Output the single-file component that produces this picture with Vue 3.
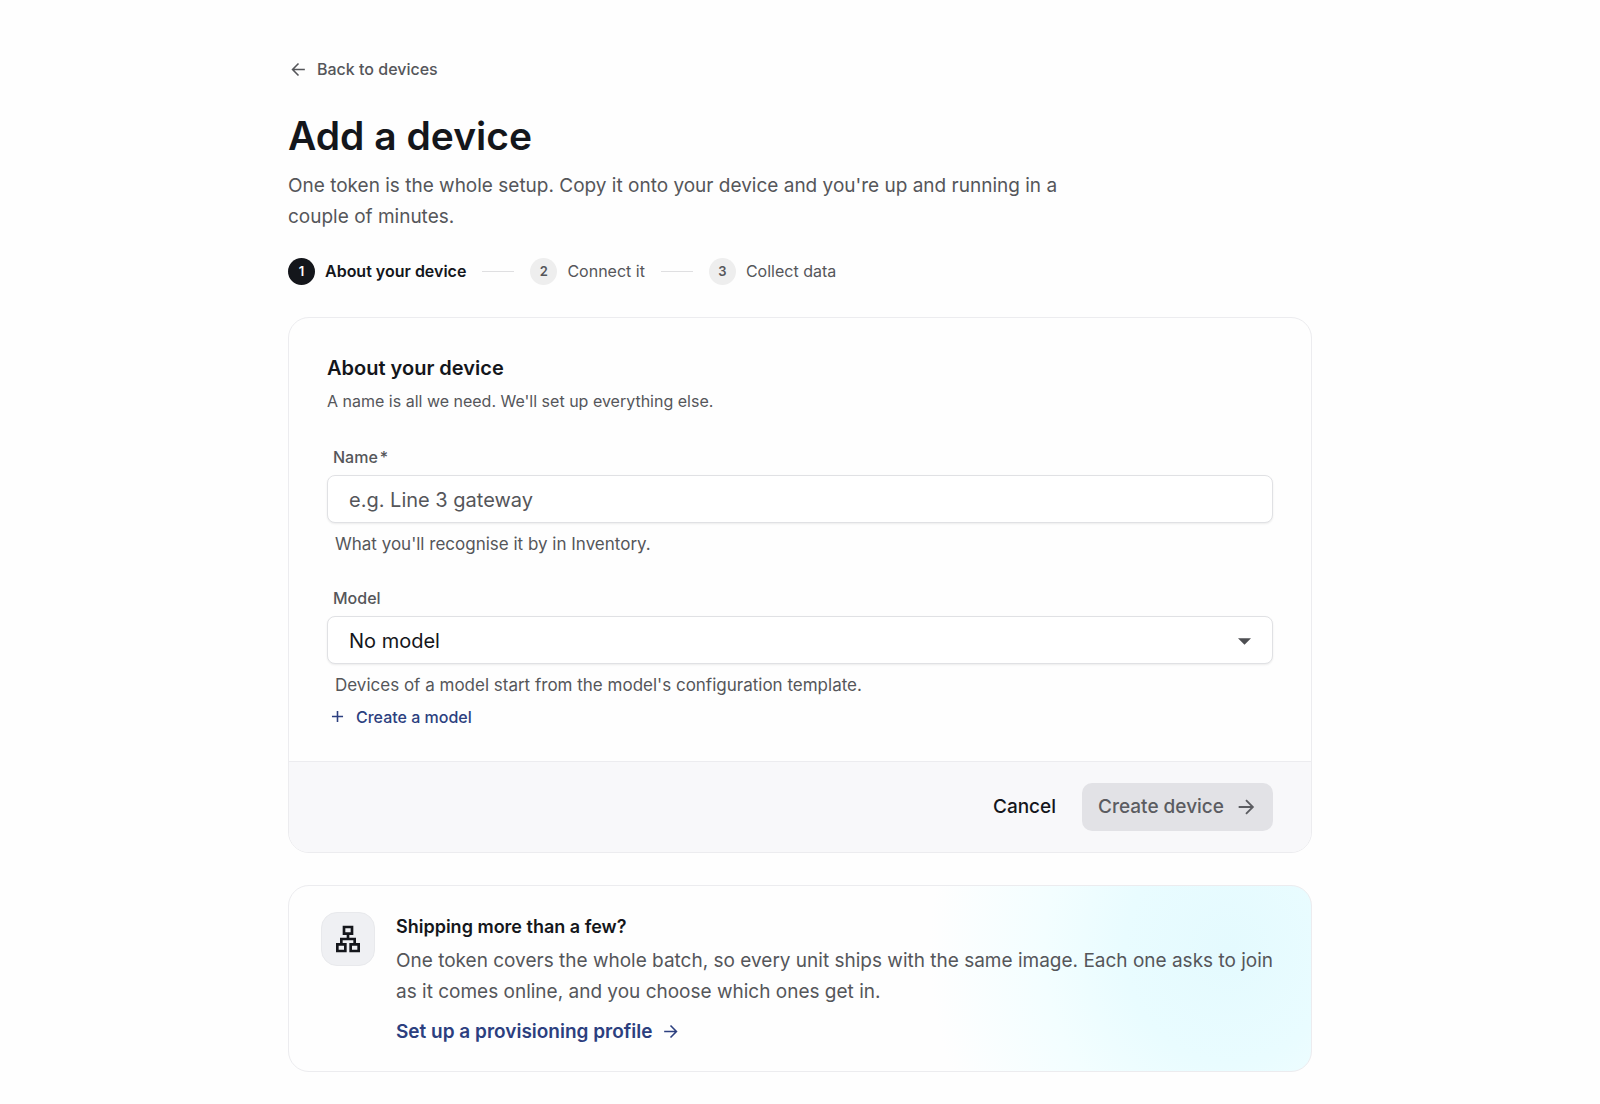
<script setup>
import { ref } from 'vue'

const steps = ['About your device', 'Connect it', 'Collect data']
const current = ref(0)
const name = ref('')
const model = ref('none')
</script>

<template>
  <main class="page">
    <a class="back" href="#devices">
      <svg class="icon" viewBox="0 0 24 24" aria-hidden="true"><path d="M20 12H5M12 4.500 4.500 12l7.500 7.500" /></svg>
      Back to devices
    </a>

    <h1>Add a device</h1>
    <p class="intro">One token is the whole setup. Copy it onto your device and you're up and running in a couple of minutes.</p>

    <ol class="steps">
      <li v-for="(step, i) in steps" :key="step" :class="{ active: i === current }">
        <span class="num">{{ i + 1 }}</span>
        <span>{{ step }}</span>
      </li>
    </ol>

    <form class="card" @submit.prevent>
      <div class="body">
        <h2>About your device</h2>
        <p class="sub">A name is all we need. We'll set up everything else.</p>

        <div class="field">
          <label for="name">Name<span class="star">*</span></label>
          <input id="name" v-model="name" type="text" placeholder="e.g. Line 3 gateway" />
          <p class="hint">What you'll recognise it by in Inventory.</p>
        </div>

        <div class="field">
          <label for="model">Model</label>
          <div class="select">
            <select id="model" v-model="model">
              <option value="none">No model</option>
            </select>
            <svg viewBox="0 0 12 6" aria-hidden="true"><path d="M0 0h12L6 6z" /></svg>
          </div>
          <p class="hint">Devices of a model start from the model's configuration template.</p>
        </div>

        <button class="create-model" type="button">
          <svg class="icon" viewBox="0 0 24 24" aria-hidden="true"><path d="M12 5v14M5 12h14" /></svg>
          Create a model
        </button>
      </div>

      <footer>
        <button class="cancel" type="button">Cancel</button>
        <button class="submit" type="submit" disabled>
          Create device
          <svg class="icon" viewBox="0 0 24 24" aria-hidden="true"><path d="M4 12h15M12 4.500l7.500 7.500-7.500 7.500" /></svg>
        </button>
      </footer>
    </form>

    <section class="card promo">
      <div class="tile">
        <svg viewBox="0 0 24 24" aria-hidden="true">
          <path fill-rule="evenodd" d="M13 22h8v-7h-3v-4h-5V9h3V2H8v7h3v2H6v4H3v7h8v-7H8v-2h8v2h-3v7zM10 7V4h4v3h-4zM9 17v3H5v-3h4zM19 17v3h-4v-3h4z" />
        </svg>
      </div>
      <div class="copy">
        <h3>Shipping more than a few?</h3>
        <p>One token covers the whole batch, so every unit ships with the same image. Each one asks to join as it comes online, and you choose which ones get in.</p>
        <a href="#provisioning">
          Set up a provisioning profile
          <svg class="icon" viewBox="0 0 24 24" aria-hidden="true"><path d="M4 12h15M12 4.500l7.500 7.500-7.500 7.500" /></svg>
        </a>
      </div>
    </section>
  </main>
</template>

<style>
body {
  margin: 0;
  background: #fefefe;
}
</style>

<style scoped>
* {
  box-sizing: border-box;
}

.page {
  max-width: 1024px;
  margin: 0 auto;
  padding: 56px 0 32px;
  font-family: Inter, "Liberation Sans", sans-serif;
  font-size: 16px;
  line-height: 24px;
  color: #14161b;
}

h1,
h2,
h3,
p,
ol {
  margin: 0;
  padding: 0;
}

button,
input,
select {
  font: inherit;
  color: inherit;
}

button {
  border: 0;
  background: none;
}

a {
  text-decoration: none;
}

.icon {
  flex: none;
  width: 19px;
  height: 19px;
  fill: none;
  stroke: currentColor;
  stroke-width: 2;
}

.back {
  display: inline-flex;
  align-items: center;
  gap: 9px;
  padding: 1px;
  font-weight: 500;
  color: #55565a;
}

h1 {
  margin-top: 27px;
  font-size: 39px;
  line-height: 48px;
  font-weight: 600;
}

.intro {
  max-width: 800px;
  margin-top: 10px;
  font-size: 19px;
  line-height: 31px;
  color: #55565a;
}

.steps {
  display: flex;
  align-items: center;
  margin-top: 26px;
  list-style: none;
  color: #55565a;
}

.steps li {
  display: flex;
  align-items: center;
  gap: 10px;
}

.steps li + li::before {
  content: "";
  width: 32px;
  height: 1px;
  margin: 0 6px 0 16px;
  background: #dfdfe1;
}

.num {
  display: grid;
  place-items: center;
  width: 27px;
  height: 27px;
  border-radius: 50%;
  background: #eeeeee;
  font-size: 13px;
  font-weight: 600;
}

.active {
  font-weight: 600;
  color: #14161b;
}

.active .num {
  background: #14161b;
  color: #ffffff;
}

.card {
  margin-top: 32px;
  border: 1px solid #ececef;
  border-radius: 21px;
  overflow: hidden;
}

.body {
  padding: 36px 38px 32px;
}

h2 {
  font-size: 20px;
  line-height: 28px;
  font-weight: 600;
}

.sub {
  margin-top: 7px;
  color: #55565a;
}

.field {
  display: flex;
  flex-direction: column;
  margin-top: 32px;
}

.field + .field {
  margin-top: 30px;
}

label {
  padding-left: 6px;
  font-weight: 500;
  color: #55565a;
}

.star {
  margin-left: 2px;
}

input,
select {
  width: 100%;
  height: 48px;
  padding: 2px 21px 0;
  border: 1px solid #e0e1e4;
  border-radius: 8px;
  background: #ffffff;
  box-shadow: 0 1px 2px rgba(20, 22, 27, 0.08);
  font-size: 20px;
}

input {
  margin-top: 6px;
}

input::placeholder {
  color: #55565a;
  opacity: 1;
}

select {
  appearance: none;
}

.select {
  position: relative;
  margin-top: 6px;
}

.select svg {
  position: absolute;
  top: 22px;
  right: 22px;
  width: 13px;
  height: 7px;
  fill: #4d4e52;
  pointer-events: none;
}

.hint {
  margin-top: 9px;
  padding-left: 8px;
  font-size: 17px;
  color: #55565a;
}

.create-model {
  display: flex;
  align-items: center;
  gap: 9px;
  margin-top: 8px;
  padding: 0 1px;
  font-weight: 500;
  color: #2c3f7f;
}

footer {
  display: flex;
  justify-content: flex-end;
  gap: 10px;
  padding: 21px 38px;
  border-top: 1px solid #ececef;
  background: #f8f8fa;
  font-size: 19px;
}

footer button {
  height: 48px;
  padding: 0 16px;
  border-radius: 10px;
  font-weight: 500;
}

.submit {
  display: flex;
  align-items: center;
  gap: 11px;
  background: #e2e2e6;
  color: #5b5c61;
}

.submit .icon {
  width: 22px;
  height: 22px;
}

.promo {
  display: flex;
  gap: 21px;
  padding: 26px 32px 24px;
  background: radial-gradient(300px 320px at 92% 35%, #e4fafe 0%, #e9fcff 35%, #f3feff 62%, #fefefe 100%);
}

.tile {
  display: grid;
  flex: none;
  place-items: center;
  width: 54px;
  height: 54px;
  border: 1px solid #e8e9ec;
  border-radius: 16px;
  background: #eff0f3;
}

.tile svg {
  width: 32px;
  height: 32px;
  fill: #14161b;
}

.copy {
  font-size: 19px;
  line-height: 31px;
}

h3 {
  font-size: 18px;
  line-height: 30px;
  font-weight: 600;
}

.copy p {
  margin-top: 3px;
  color: #55565a;
}

.copy a {
  display: inline-flex;
  align-items: center;
  gap: 9px;
  margin-top: 9px;
  font-weight: 600;
  color: #2c3f7f;
}
</style>
